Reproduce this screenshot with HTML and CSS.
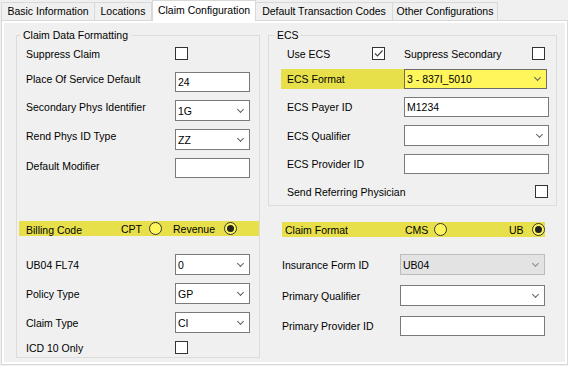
FILE: index.html
```html
<!DOCTYPE html>
<html lang="en">
<head>
    <meta charset="UTF-8">
    <title>Claim Configuration</title>
    <link rel="stylesheet" href="styles.css">
</head>
<body>
    <div class="tabs">
        <div class="tab">Basic Information</div>
        <div class="tab">Locations</div>
        <div class="tab active">Claim Configuration</div>
        <div class="tab">Default Transaction Codes</div>
        <div class="tab">Other Configurations</div>
    </div>
    <div class="frame">
        <div class="page">
            <!-- left group -->
            <fieldset class="group data">
                <legend>Claim Data Formatting</legend>
                <div class="row first">
                    <span class="lbl">Suppress Claim</span>
                    <span class="chk"></span>
                </div>
                <div class="row wide up">
                    <span class="lbl">Place Of Service Default</span>
                    <div class="box">24</div>
                </div>
                <div class="row up">
                    <span class="lbl">Secondary Phys Identifier</span>
                    <div class="combo">1G</div>
                </div>
                <div class="row up">
                    <span class="lbl">Rend Phys ID Type</span>
                    <div class="combo">ZZ</div>
                </div>
                <div class="row up-s">
                    <span class="lbl">Default Modifier</span>
                    <div class="box"></div>
                </div>
                <div class="band billing">
                    <span class="band-lbl low">Billing Code</span>
                    <span class="opt cpt">CPT</span>
                    <span class="radio"></span>
                    <span class="opt rev">Revenue</span>
                    <span class="radio on"></span>
                </div>
                <div class="row after-band">
                    <span class="lbl">UB04 FL74</span>
                    <div class="combo">0</div>
                </div>
                <div class="row">
                    <span class="lbl">Policy Type</span>
                    <div class="combo">GP</div>
                </div>
                <div class="row">
                    <span class="lbl">Claim Type</span>
                    <div class="combo">CI</div>
                </div>
                <div class="row">
                    <span class="lbl">ICD 10 Only</span>
                    <span class="chk"></span>
                </div>
            </fieldset>

            <div class="side">
                <fieldset class="group ecs">
                    <legend>ECS</legend>
                    <div class="row first">
                        <span class="lbl use">Use ECS</span>
                        <span class="chk">
                            <svg width="11" height="11" viewBox="0 0 11 11"><path d="M2 5.5 L4.5 8 L9.5 2.5" fill="none" stroke="#444" stroke-width="1.2"/></svg>
                        </span>
                        <span class="lbl sup">Suppress Secondary</span>
                        <span class="chk"></span>
                    </div>
                    <div class="row format">
                        <span class="lbl">ECS Format</span>
                        <div class="combo hot">3 - 837I_5010</div>
                    </div>
                    <div class="row">
                        <span class="lbl">ECS Payer ID</span>
                        <div class="box">M1234</div>
                    </div>
                    <div class="row">
                        <span class="lbl">ECS Qualifier</span>
                        <div class="combo"></div>
                    </div>
                    <div class="row">
                        <span class="lbl">ECS Provider ID</span>
                        <div class="box"></div>
                    </div>
                    <div class="row send">
                        <span class="lbl grow">Send Referring Physician</span>
                        <span class="chk"></span>
                    </div>
                </fieldset>

                <div class="lower">
                    <div class="band claim">
                        <span class="band-lbl">Claim Format</span>
                        <span class="opt cms">CMS</span>
                        <span class="radio"></span>
                        <span class="opt ub">UB</span>
                        <span class="radio on"></span>
                    </div>
                    <div class="row after-band">
                        <span class="lbl">Insurance Form ID</span>
                        <div class="combo off">UB04</div>
                    </div>
                    <div class="row spaced">
                        <span class="lbl">Primary Qualifier</span>
                        <div class="combo"></div>
                    </div>
                    <div class="row spaced">
                        <span class="lbl">Primary Provider ID</span>
                        <div class="box"></div>
                    </div>
                </div>
            </div>
        </div>
    </div>
</body>
</html>
```

FILE: styles.css
```css
body {
    margin: 0;
    background-color: #f0f0f0;
    font-family: "Liberation Sans", Arial, sans-serif;
    font-size: 10.5px;
    line-height: 12px;
    color: #000;
}

/* tab strip */
.tabs {
    display: grid;
    grid-template-columns: 94px 57px 104px 137px 105px;
    align-items: end;
    height: 20px;
    margin-left: 1px;
}

.tab {
    height: 18px;
    line-height: 17px;
    text-align: center;
    white-space: nowrap;
    border: 1px solid #d9d9d9;
    border-bottom: none;
    border-left: none;
    box-sizing: border-box;
    background-color: #f0f0f0;
}

.tab:first-child {
    border-left: 1px solid #d9d9d9;
}

.tab.active {
    position: relative;
    z-index: 1;
    height: 21px;
    line-height: 19px;
    margin-bottom: -1px;
    background-color: #fff;
    border-left: 1px solid #d9d9d9;
}

/* tab page */
.frame {
    width: 567px;
    height: 345px;
    margin-left: 1px;
    padding: 2px;
    border: 1px solid #d9d9d9;
    background-color: #fff;
    box-sizing: border-box;
}

.page {
    height: 100%;
    box-sizing: border-box;
    padding: 6px 8px 0 12px;
    background-color: #f0f0f0;
    display: grid;
    grid-template-columns: 244px 289px;
    column-gap: 8px;
    align-items: start;
}

.group {
    margin: 0;
    min-width: 0;
    border: 1px solid #dcdcdc;
}

.group legend {
    line-height: 12px;
}

.data {
    padding: 0 8px 3px 9px;
}

.data legend {
    padding: 0 3px;
    margin-left: -6px;
}

.ecs {
    padding: 0 7px 7px 18px;
}

.ecs legend {
    padding: 0 2px;
    margin-left: -12px;
}

/* rows */
.row {
    display: flex;
    align-items: center;
    margin-top: 8px;
}

.row.first {
    margin-top: 6px;
}

.row.wide {
    margin-top: 12px;
}

.row.after-band {
    margin-top: 18px;
}

.lower .row.after-band {
    margin-top: 17px;
}

.row.up .lbl {
    padding-bottom: 7px;
}

.row.up-s .lbl {
    padding-bottom: 4px;
}

.lbl {
    white-space: nowrap;
    flex-shrink: 0;
}

.data .lbl {
    width: 149px;
}

.ecs .lbl {
    width: 117px;
}

.lower .lbl {
    width: 118px;
}

.ecs .lbl.use {
    width: 85px;
}

.ecs .lbl.sup {
    width: 128px;
    margin-left: 19px;
}

.ecs .lbl.grow {
    width: auto;
    flex: 1;
}

.row.format {
    margin: 9px 2px 0 -6px;
    padding-left: 6px;
    background-color: #e8e04a;
}

.row.send {
    margin-top: 11px;
}

.row.send .chk {
    margin-right: 1px;
}

.row.spaced {
    margin-top: 10px;
}

/* controls */
.box,
.combo {
    height: 20px;
    padding: 0 6px 0 2px;
    border: 1px solid #7a7a7a;
    background-color: #fff;
    box-sizing: border-box;
    display: flex;
    align-items: center;
    white-space: nowrap;
}

.data .box,
.data .combo {
    width: 75px;
}

.ecs .box,
.ecs .combo,
.lower .box,
.lower .combo {
    flex: 1;
}

.combo {
    height: 21px;
}

.combo::after {
    content: "";
    width: 4px;
    height: 4px;
    margin-left: auto;
    margin-top: -3px;
    border-right: 1px solid #606060;
    border-bottom: 1px solid #606060;
    transform: rotate(45deg);
}

.combo.hot {
    height: 20px;
    background-color: #fff65c;
    border-color: #6b6b6b;
}

.combo.off {
    background-color: #e3e3e3;
    border-color: #bcbcbc;
}

.combo.off::after {
    border-color: #8a8a8a;
}

.chk {
    width: 13px;
    height: 13px;
    border: 1px solid #333;
    background-color: #fff;
    box-sizing: border-box;
    display: flex;
    align-items: center;
    justify-content: center;
    flex-shrink: 0;
}

.chk svg {
    display: block;
}

/* yellow option bands */
.band {
    display: flex;
    align-items: center;
    height: 15px;
    background-color: #e8e04a;
    white-space: nowrap;
}

.billing {
    margin: 43px -8px 0 -7px;
    padding-left: 7px;
}

.billing .band-lbl {
    width: 95px;
}

.band-lbl.low {
    padding-top: 3px;
}

.opt.cpt {
    width: 28px;
}

.opt.rev {
    width: 51px;
    margin-left: 11px;
}

.claim {
    margin-top: 16px;
    padding-left: 3px;
}

.claim .band-lbl {
    width: 120px;
}

.opt.cms {
    width: 29px;
}

.opt.ub {
    width: 23px;
    margin-left: auto;
}

.radio {
    width: 13px;
    height: 13px;
    border-radius: 50%;
    border: 1px solid #333;
    background-color: #fff65c;
    box-sizing: border-box;
    display: flex;
    align-items: center;
    justify-content: center;
    flex-shrink: 0;
}

.radio.on::after {
    content: "";
    width: 7px;
    height: 7px;
    border-radius: 50%;
    background-color: #222;
}

.lower {
    padding: 0 12px 0 14px;
}
```
